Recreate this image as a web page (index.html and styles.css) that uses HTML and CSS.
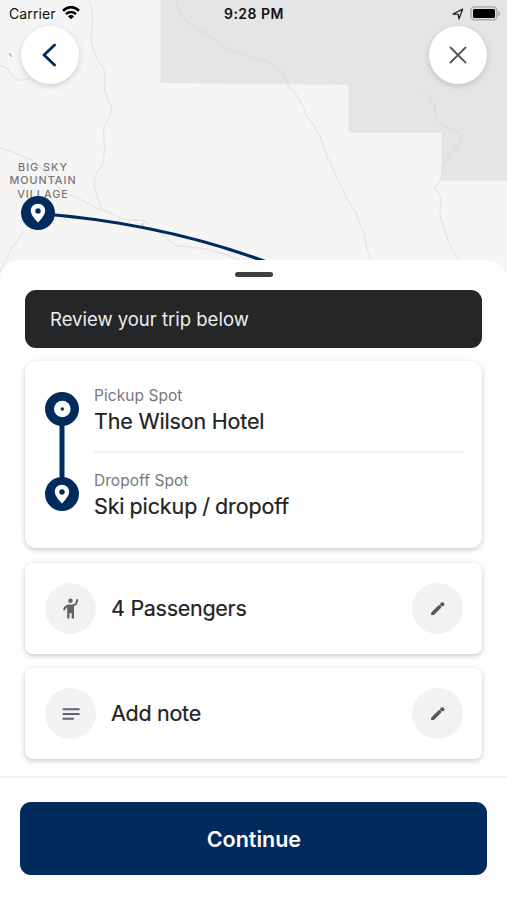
FILE: index.html
```html
<!DOCTYPE html>
<html lang="en">
<head>
<meta charset="utf-8">
<meta name="viewport" content="width=device-width, initial-scale=1">
<title>Review trip</title>
<link rel="stylesheet" href="styles.css">
</head>
<body>
<svg class="sprite" aria-hidden="true">
  <symbol id="pin" viewBox="0 0 34 34">
    <circle cx="17" cy="17" r="17" fill="#002b5c"/>
    <path fill="#fff" fill-rule="evenodd" d="M17 7.800c-4.100 0-7.200 3.100-7.200 7 0 4.900 7.200 11.700 7.200 11.700s7.200-6.800 7.200-11.700c0-3.900-3.100-7-7.200-7zM17 12.200a2.700 2.700 0 1 1 0 5.400a2.700 2.700 0 1 1 0-5.400z"/>
  </symbol>
  <symbol id="pencil" viewBox="0 0 24 24">
    <path d="M7.100 16.300L13.400 10" fill="none" stroke="#57575c" stroke-width="3.700" stroke-linecap="round"/>
    <path d="M5.200 15.500v2.600h2.600z" fill="#57575c"/>
    <circle cx="16.300" cy="7.300" r="2.150" fill="#57575c"/>
  </symbol>
</svg>
<main class="screen">
  <section class="map">
    <svg class="map-art" viewBox="0 0 507 280" aria-hidden="true">
      <path fill="#e5e5e5" d="M160.500 0H507V180.500H441.300V132.800H348.500V84.800L160.500 83z"/>
      <g class="roads">
        <path d="M89 0Q94 12 92 30Q89 43 96 56Q98 62 104 68Q105 78 105 90Q107 99 112 108Q111 116 104 127Q103 134 105 147Q104 159 102 166Q94 174 94 184Q96 196 102 209"/>
        <path d="M0 148C13 150 19 156 32 160C45 168 54 188 69 195C82 198 91 207 102 210C113 212 122 222 137 220C149 220 150 226 153 229C164 233 168 241 177 246C198 247 215 249 239 260"/>
        <path d="M0 66Q7 66 11 74Q18 84 30 78M24 230Q20 239 13 246Q7 257 0 272"/>
        <path d="M176 0Q180 16 190 24Q210 35 226 48Q243 55 253 58Q280 61 289 86Q301 98 307 117Q315 124 322 142Q328 161 340 184Q349 204 357 214Q358 224 365 234Q365 246 371 259"/>
        <path d="M420 90Q436 98 436 116Q439 126 455 130Q466 136 460 143Q449 154 442 167Q444 177 434 189Q441 193 441 202Q438 217 445 230Q446 241 459 260"/>
      </g>
      <path d="M9 53l3 4M142.500 223v4" stroke="#bbb" stroke-width="1.500"/>
      <path d="M38 213.500Q163 223 269 263" fill="none" stroke="#002b5c" stroke-width="3.200"/>
    </svg>
    <header class="status">
      <div class="status-side">
        <span class="carrier">Carrier</span>
        <svg class="wifi" viewBox="0 0 18 14" fill="none" stroke="#000"><path d="M1 4.700Q9-2.300 17 4.700" stroke-width="2.700"/><path d="M3.900 8.100Q9 3.800 14.100 8.100" stroke-width="2.400"/><path d="M9 13.300L5.900 10.300Q9 7.900 12.100 10.300z" fill="#000" stroke="none"/></svg>
      </div>
      <span class="clock">9:28 PM</span>
      <div class="status-side status-right">
        <svg class="locate" viewBox="0 0 12 12"><path d="M1 6.200L10.600 1.200L7 11L6.200 6.300z" fill="none" stroke="#222" stroke-width="1.300" stroke-linejoin="round"/></svg>
        <svg class="battery" viewBox="0 0 31 15"><rect x=".9" y=".9" width="26" height="13" rx="3.600" fill="#ddd" stroke="#a5a5a5" stroke-width="1.300"/><rect x="3" y="3" width="22" height="9" rx="1.500"/><path d="M28.300 4.500q3.800 3 0 6z" fill="#a5a5a5"/></svg>
      </div>
    </header>
    <nav class="nav">
      <button class="round" aria-label="Back"><svg viewBox="0 0 58 58"><path d="M33.600 19L23 29L33.600 39" fill="none" stroke="#002b5c" stroke-width="2.800" stroke-linecap="round" stroke-linejoin="round"/></svg></button>
      <button class="round" aria-label="Close"><svg viewBox="0 0 58 58"><path d="M21.500 21.500L36.500 36.500M36.500 21.500L21.500 36.500" stroke="#555" stroke-width="1.800" stroke-linecap="round"/></svg></button>
    </nav>
    <div class="place">
      <div class="place-name">BIG SKY<br>MOUNTAIN<br>VILLAGE</div>
      <svg class="place-pin"><use href="#pin"/></svg>
    </div>
  </section>

  <section class="sheet">
    <div class="handle"></div>
    <div class="banner"><span>Review your trip below</span></div>
    <div class="card trip">
      <svg class="route" viewBox="0 0 34 119"><path d="M17 17V102" stroke="#002b5c" stroke-width="5"/><circle cx="17" cy="17" r="17" fill="#002b5c"/><circle cx="17.300" cy="17" r="8.300" fill="#fff"/><circle cx="17.300" cy="17" r="1.700" fill="#002b5c"/><use href="#pin" y="85" width="34" height="34"/></svg>
      <div class="stops">
        <div class="stop"><div class="label pickup">Pickup Spot</div><div class="value hotel">The Wilson Hotel</div></div>
        <div class="stop"><div class="label dropoff">Dropoff Spot</div><div class="value ski">Ski pickup / dropoff</div></div>
      </div>
    </div>
    <div class="card option">
      <span class="dot"><svg viewBox="0 0 24 24"><circle cx="11.500" cy="3.700" r="2.200" fill="#62626c"/><path d="M18.300 3L17 7L14 8.700H9.500Q6 9 5.200 12.500" fill="none" stroke="#62626c" stroke-width="2" stroke-linecap="round" stroke-linejoin="round"/><path d="M8.200 7.700H15V21.600H12.700V16.200H10.500V21.600H8.200z" fill="#62626c"/></svg></span>
      <span class="value passengers">4 Passengers</span>
      <span class="dot edit"><svg><use href="#pencil"/></svg></span>
    </div>
    <div class="card option">
      <span class="dot"><svg viewBox="0 0 24 24"><path d="M4.500 7.200H19.800M4.500 12H19.800M4.500 16.800H14" stroke="#62626c" stroke-width="2.100" stroke-linecap="round"/></svg></span>
      <span class="value note">Add note</span>
      <span class="dot edit"><svg><use href="#pencil"/></svg></span>
    </div>
    <footer class="footer"><button class="continue"><span>Continue</span></button></footer>
  </section>
</main>
</body>
</html>
```
FILE: styles.css
```css
* { box-sizing: border-box; }
body { margin: 0; font-family: Inter, "Liberation Sans", sans-serif; color: #222; }
button { border: 0; padding: 0; font: inherit; }
svg { display: block; }
.sprite { position: absolute; width: 0; height: 0; }
.screen { width: 507px; height: 900px; overflow: hidden; display: flex; flex-direction: column; background: #f5f5f5; }
.map { height: 260px; flex: none; position: relative; isolation: isolate; }
.map-art { position: absolute; inset: 0; z-index: -1; width: 507px; height: 280px; }
.roads { fill: none; stroke: #d2d2d2; stroke-opacity: .45; stroke-width: 1.300; }
.status { height: 26px; padding: 1px 8px 0 9px; display: grid; grid-template-columns: 1fr auto 1fr; align-items: center; color: #111; }
.status-side { display: flex; align-items: center; gap: 6px; }
.status-right { justify-content: flex-end; margin-right: -2px; }
.carrier { font-size: 14px; letter-spacing: .1px; }
.clock { font-size: 14px; font-weight: 600; letter-spacing: .5px; }
.wifi { width: 18px; height: 14px; margin-top: -2px; }
.locate { width: 12px; height: 12px; }
.battery { width: 31px; height: 15px; margin-top: -1px; }
.nav { display: flex; justify-content: space-between; padding: 0 20px 0 21px; }
.round { width: 58px; height: 58px; border-radius: 50%; background: #fff; box-shadow: 0 2px 6px rgba(0,0,0,.16); }
.place { width: 86px; margin-top: 77px; display: flex; flex-direction: column; }
.place-name { text-align: center; font-size: 10.800px; line-height: 13.300px; letter-spacing: 1px; color: #777; font-weight: 500; }
.place-pin { width: 34px; height: 34px; margin: -5px 0 0 21px; }
.sheet { flex: 1; background: #fefefe; border-radius: 20px 20px 0 0; padding: 12px 0 0; position: relative; display: flex; flex-direction: column; }
.handle { width: 38px; height: 5px; border-radius: 3px; background: #404042; margin: 0 auto 13px; }
.banner { height: 58px; margin: 0 25px 13px; padding-left: 25px; border-radius: 11px; background: #242627; color: #eee; font-size: 18.500px; display: flex; align-items: center; }
.card { margin: 0 25px; background: #fff; border-radius: 8px; box-shadow: 0 2px 5px rgba(0,0,0,.18), 0 0 8px rgba(0,0,0,.04); }
.trip { height: 187px; margin-bottom: 15px; padding: 25px 19px 20px 20px; display: flex; gap: 15px; border-radius: 11px; }
.route { width: 34px; height: 119px; margin-top: 6px; }
.stops { flex: 1; }
.stop { height: 85px; }
.stop:first-child { height: 67px; border-bottom: 2px solid #f0f0f0; margin-bottom: 18px; }
.label { font-size: 15.500px; line-height: 20px; color: #77777d; letter-spacing: .05px; }
.value { font-size: 21.500px; line-height: 26px; letter-spacing: -.28px; white-space: nowrap; -webkit-text-stroke: .2px; }
.stop .value { margin-top: 2px; }
.stop .hotel { letter-spacing: -.18px; }
.stop .ski { letter-spacing: -.12px; word-spacing: -.8px; }
.option { height: 91px; margin-bottom: 14px; padding: 0 19px 0 20px; display: flex; align-items: center; }
.dot { width: 51px; height: 51px; border-radius: 50%; background: #f2f2f2; display: grid; place-items: center; }
.dot svg { width: 24px; height: 24px; }
.edit { margin-left: auto; }
.dot + .value { margin: 0 0 2px 15px; }
.footer { margin-top: 3px; border-top: 2px solid #f5f5f5; padding: 24.400px 20.400px; }
.continue { width: 467px; height: 73px; border-radius: 11px; background: #002b5c; color: #fff; font-size: 21.500px; font-weight: 600; }
```
